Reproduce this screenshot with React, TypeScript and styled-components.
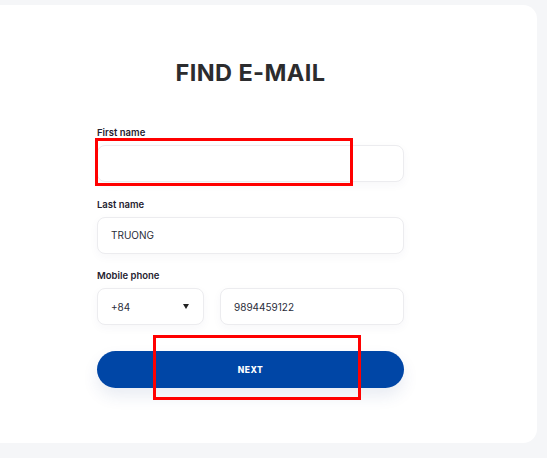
import React from "react";
import styled, { createGlobalStyle } from "styled-components";

const Global = createGlobalStyle`
  html, body { margin: 0; padding: 0; background: #f5f6f8; }
  body { width: 547px; height: 458px; overflow: hidden; font-family: "Inter", "Noto Sans", sans-serif; }
  * { box-sizing: border-box; }
`;

const Page = styled.div`
  position: relative;
  width: 547px;
  height: 458px;
  padding-top: 5px;
`;

const Card = styled.div`
  margin-left: -20px;
  width: 557px;
  height: 438px;
  background: #ffffff;
  border-radius: 14px;
  padding: 54px 0 0 117px;
`;

const Form = styled.div`
  width: 307px;
  display: flex;
  flex-direction: column;
`;

const Title = styled.h1`
  margin: 0 0 40px;
  text-align: center;
  font-size: 23.5px;
  font-weight: 700;
  color: #2c2c2e;
  letter-spacing: 0.4px;
  line-height: 28px;
`;

const Label = styled.label`
  font-size: 9.5px;
  font-weight: 600;
  color: #1f2230;
  line-height: 12px;
  margin-bottom: 6px;
`;

const Field = styled.div`
  display: flex;
  flex-direction: column;
  margin-bottom: 16.5px;
`;

const Row = styled.div`
  display: flex;
  gap: 16px;
`;

const Box = styled.div<{ $w?: string }>`
  height: 37px;
  flex: ${(p) => (p.$w ? `0 0 ${p.$w}` : "1 1 auto")};
  border: 1px solid #ececef;
  border-radius: 8px;
  background: #fff;
  box-shadow: 0 3px 10px rgba(40, 60, 110, 0.04);
  display: flex;
  align-items: center;
  justify-content: space-between;
  padding: 0 13px;
  font-size: 10px;
  color: #2a2d3a;
`;

const Caret = styled.span`
  width: 0;
  height: 0;
  border-left: 3px solid transparent;
  border-right: 3px solid transparent;
  border-top: 5px solid #222;
  margin-right: 1px;
`;

const Button = styled.button`
  margin-top: 9.5px;
  height: 37px;
  border: none;
  border-radius: 19px;
  background: #0046a6;
  color: #fff;
  font-family: inherit;
  font-size: 8.5px;
  font-weight: 800;
  letter-spacing: 0.5px;
  box-shadow: 0 8px 16px rgba(40, 70, 140, 0.1);
`;

const Mark = styled.div<{ $x: number; $y: number; $w: number; $h: number }>`
  position: absolute;
  left: ${(p) => p.$x}px;
  top: ${(p) => p.$y}px;
  width: ${(p) => p.$w}px;
  height: ${(p) => p.$h}px;
  border: 3px solid #ff0000;
  pointer-events: none;
`;

export default function App() {
  return (
    <Page>
      <Global />
      <Card>
        <Form>
          <Title>FIND E-MAIL</Title>
          <Field>
            <Label>First name</Label>
            <Box />
          </Field>
          <Field>
            <Label>Last name</Label>
            <Box>TRUONG</Box>
          </Field>
          <Field>
            <Label>Mobile phone</Label>
            <Row>
              <Box $w="107px">
                <span>+84</span>
                <Caret />
              </Box>
              <Box>9894459122</Box>
            </Row>
          </Field>
          <Button>NEXT</Button>
        </Form>
      </Card>
      <Mark $x={95} $y={138} $w={258} $h={48} />
      <Mark $x={153} $y={335} $w={208} $h={65} />
    </Page>
  );
}
